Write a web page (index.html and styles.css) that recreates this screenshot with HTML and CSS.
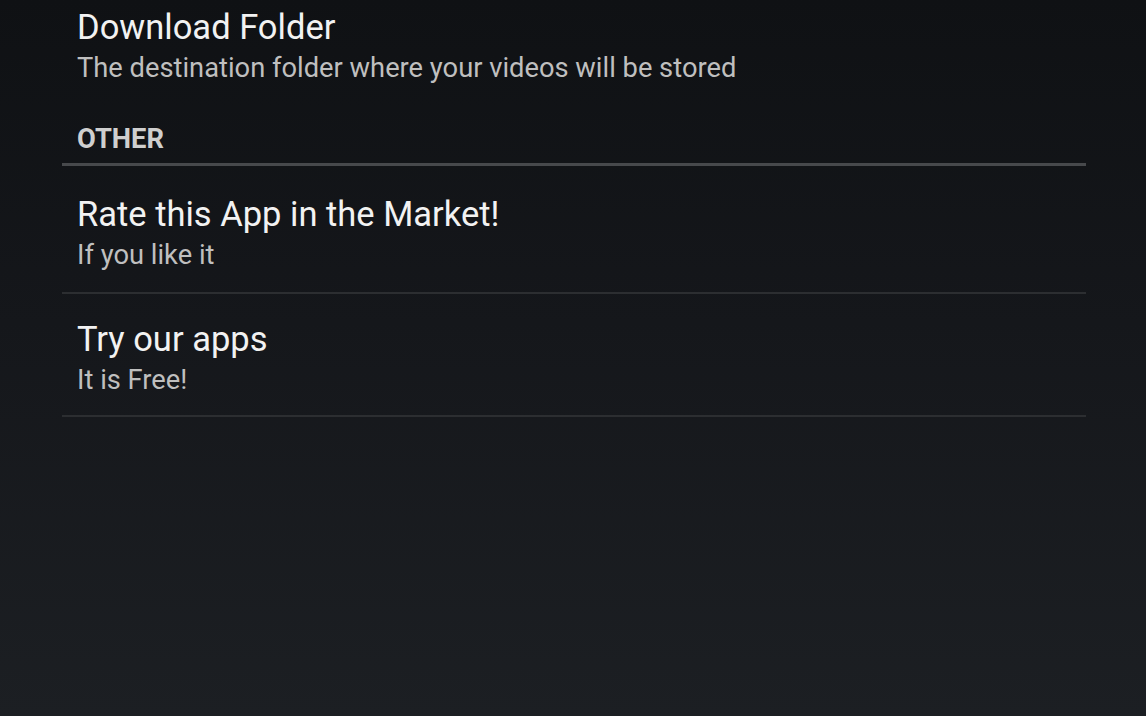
FILE: index.html
```html
<!DOCTYPE html>
<html>
<head>
<meta charset="utf-8">
<link rel="stylesheet" href="styles.css">
</head>
<body>
<div class="list">
  <div class="pref first">
    <div class="title">Download Folder</div>
    <div class="summary">The destination folder where your videos will be stored</div>
  </div>
  <div class="category">OTHER</div>
  <div class="pref rate">
    <div class="title">Rate this App in the Market!</div>
    <div class="summary">If you like it</div>
  </div>
  <div class="pref apps">
    <div class="title">Try our apps</div>
    <div class="summary">It is Free!</div>
  </div>
</div>
</body>
</html>
```
FILE: styles.css
```css
html, body {
  margin: 0;
  height: 100%;
}
body {
  background: linear-gradient(to bottom, #0f1114 0%, #15171b 45%, #1c1f23 100%);
  font-family: Roboto, "Noto Sans", sans-serif;
  color: #f2f2f2;
  overflow: hidden;
}
.list {
  margin: 0 60px 0 62px;
}
.pref {
  padding: 19px 15px;
  border-bottom: 2px solid #2c2e31;
}
.pref.first {
  padding-top: 5px;
  padding-bottom: 36px;
  border-bottom: none;
}
.pref.rate {
  padding-bottom: 18px;
}
.pref.apps {
  padding-top: 23px;
  padding-bottom: 16px;
}
.title {
  font-size: 34.5px;
  line-height: 44px;
  color: #f2f2f2;
}
.summary {
  font-size: 27.3px;
  line-height: 38px;
  color: #bfbfbf;
}
.category {
  padding: 0 15px 8px;
  margin-bottom: 7px;
  font-size: 27.3px;
  font-weight: bold;
  color: #cfcfcf;
  line-height: 32px;
  border-bottom: 3px solid #47494c;
}
```
